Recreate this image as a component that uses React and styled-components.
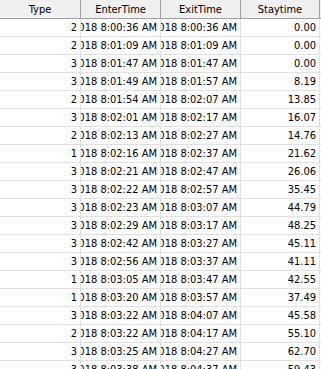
import styled, { createGlobalStyle } from "styled-components";

const GlobalStyle = createGlobalStyle`
  html, body {
    margin: 0;
    padding: 0;
    background: #ffffff;
    overflow: hidden;
  }
`;

const rows = [
  [2, "8:00:36", "8:00:36", "0.00"],
  [2, "8:01:09", "8:01:09", "0.00"],
  [3, "8:01:47", "8:01:47", "0.00"],
  [3, "8:01:49", "8:01:57", "8.19"],
  [2, "8:01:54", "8:02:07", "13.85"],
  [3, "8:02:01", "8:02:17", "16.07"],
  [2, "8:02:13", "8:02:27", "14.76"],
  [1, "8:02:16", "8:02:37", "21.62"],
  [3, "8:02:21", "8:02:47", "26.06"],
  [3, "8:02:22", "8:02:57", "35.45"],
  [3, "8:02:23", "8:03:07", "44.79"],
  [3, "8:02:29", "8:03:17", "48.25"],
  [3, "8:02:42", "8:03:27", "45.11"],
  [3, "8:02:56", "8:03:37", "41.11"],
  [1, "8:03:05", "8:03:47", "42.55"],
  [1, "8:03:20", "8:03:57", "37.49"],
  [3, "8:03:22", "8:04:07", "45.58"],
  [2, "8:03:22", "8:04:17", "55.10"],
  [3, "8:03:25", "8:04:27", "62.70"],
  [3, "8:03:38", "8:04:37", "59.43"],
];

const columns = ["Type", "EnterTime", "ExitTime", "Staytime"];

export default function App() {
  return (
    <>
      <GlobalStyle />
      <Grid>
        <HeaderRow>
          {columns.map((c) => (
            <HeadCell key={c}>{c}</HeadCell>
          ))}
        </HeaderRow>
        {rows.map((r, i) => (
          <Row key={i}>
            <Cell>{r[0]}</Cell>
            <Cell>3/12/2018 {r[1]} AM</Cell>
            <Cell>3/12/2018 {r[2]} AM</Cell>
            <Cell>{r[3]}</Cell>
          </Row>
        ))}
      </Grid>
    </>
  );
}

const Grid = styled.div`
  width: 321px;
  height: 369px;
  overflow: hidden;
  font-family: "DejaVu Sans Condensed", "DejaVu Sans", Tahoma, sans-serif;
  font-stretch: condensed;
  font-size: 11px;
  color: #000000;
  background: #ffffff;
`;

const HeaderRow = styled.div`
  display: grid;
  grid-template-columns: 81px 80px 80px 79px;
  height: 18px;
  background: #f0f0f0;
  border-bottom: 1px solid #a0a0a0;
`;

const HeadCell = styled.div`
  display: flex;
  align-items: center;
  justify-content: center;
  border-right: 1px solid #a0a0a0;
  box-sizing: border-box;
`;

const Row = styled.div`
  display: grid;
  grid-template-columns: 81px 80px 80px 79px;
  height: 18px;
  box-sizing: border-box;
  border-bottom: 1px solid #e0e0e0;
`;

const Cell = styled.div`
  display: flex;
  align-items: center;
  justify-content: flex-end;
  white-space: nowrap;
  overflow: hidden;
  padding-right: 3px;
  border-right: 1px solid #e0e0e0;
  box-sizing: border-box;
`;
